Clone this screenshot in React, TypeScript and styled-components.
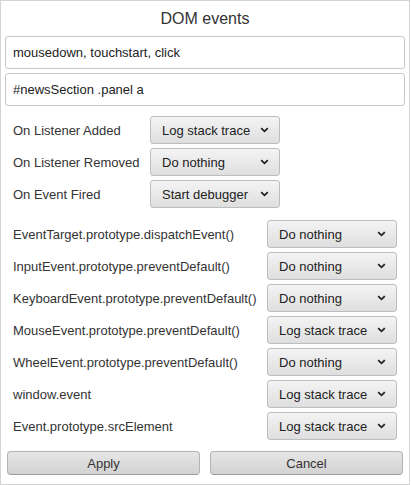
import React from "react";
import styled, { createGlobalStyle } from "styled-components";

const Global = createGlobalStyle`
  html, body { margin: 0; padding: 0; background: #ffffff; }
  body { font-family: "Liberation Sans", Arial, sans-serif; }
  * { box-sizing: border-box; }
`;

const Dialog = styled.div`
  width: 410px;
  height: 485px;
  border: 1px solid #d4d4d4;
  background: #ffffff;
  padding: 0 4px;
  display: flex;
  flex-direction: column;
  font-family: "Liberation Sans", Arial, sans-serif;
  color: #333333;
`;

const Title = styled.div`
  height: 35px;
  display: flex;
  align-items: center;
  justify-content: center;
  font-size: 16px;
  color: #333333;
  padding-top: 1px;
`;

const TextField = styled.div`
  height: 33px;
  border: 1px solid #c8c8c8;
  border-radius: 3px;
  display: flex;
  align-items: center;
  padding: 0 0 0 7px;
  font-size: 13px;
  color: #222222;
  margin-bottom: 4px;
`;

const Group = styled.div<{ $labelWidth: number; $top: number }>`
  display: grid;
  grid-template-columns: ${(p) => p.$labelWidth}px 130px;
  row-gap: 4px;
  margin-top: ${(p) => p.$top}px;
  padding-left: 8px;
  align-items: center;
`;

const Label = styled.div`
  font-size: 13px;
  color: #333333;
  white-space: nowrap;
`;

const Select = styled.div`
  height: 28px;
  border: 1px solid #bdbdbd;
  border-radius: 3px;
  background: linear-gradient(#f4f4f4, #dedede);
  display: flex;
  align-items: center;
  justify-content: space-between;
  padding: 0 10px 0 11px;
  font-size: 13px;
  color: #222222;
  white-space: nowrap;
`;

const Chevron = styled.svg`
  flex: none;
  margin-left: 4px;
`;

const Buttons = styled.div`
  display: grid;
  grid-template-columns: 1fr 1fr;
  column-gap: 10px;
  padding: 0 2px;
  margin-top: 11px;
`;

const Button = styled.div`
  height: 24px;
  border: 1px solid #b4b4b4;
  border-bottom-color: #9c9c9c;
  border-radius: 4px;
  background: linear-gradient(#e6e6e6, #d2d2d2);
  display: flex;
  align-items: center;
  justify-content: center;
  font-size: 13px;
  color: #333333;
`;

const Dropdown = ({ value }: { value: string }) => (
  <Select>
    <span>{value}</span>
    <Chevron width="9" height="6" viewBox="0 0 9 6">
      <path d="M1.2 1.2 L4.5 4.3 L7.8 1.2" fill="none" stroke="#222" strokeWidth="1.8" />
    </Chevron>
  </Select>
);

const listenerRows: [string, string][] = [
  ["On Listener Added", "Log stack trace"],
  ["On Listener Removed", "Do nothing"],
  ["On Event Fired", "Start debugger"],
];

const apiRows: [string, string][] = [
  ["EventTarget.prototype.dispatchEvent()", "Do nothing"],
  ["InputEvent.prototype.preventDefault()", "Do nothing"],
  ["KeyboardEvent.prototype.preventDefault()", "Do nothing"],
  ["MouseEvent.prototype.preventDefault()", "Log stack trace"],
  ["WheelEvent.prototype.preventDefault()", "Do nothing"],
  ["window.event", "Log stack trace"],
  ["Event.prototype.srcElement", "Log stack trace"],
];

export default function App() {
  return (
    <>
      <Global />
      <Dialog>
        <Title>DOM events</Title>
        <TextField>mousedown, touchstart, click</TextField>
        <TextField>#newsSection .panel a</TextField>
        <Group $labelWidth={137} $top={6}>
          {listenerRows.map(([l, v]) => (
            <React.Fragment key={l}>
              <Label>{l}</Label>
              <Dropdown value={v} />
            </React.Fragment>
          ))}
        </Group>
        <Group $labelWidth={254} $top={12}>
          {apiRows.map(([l, v]) => (
            <React.Fragment key={l}>
              <Label>{l}</Label>
              <Dropdown value={v} />
            </React.Fragment>
          ))}
        </Group>
        <Buttons>
          <Button>Apply</Button>
          <Button>Cancel</Button>
        </Buttons>
      </Dialog>
    </>
  );
}
